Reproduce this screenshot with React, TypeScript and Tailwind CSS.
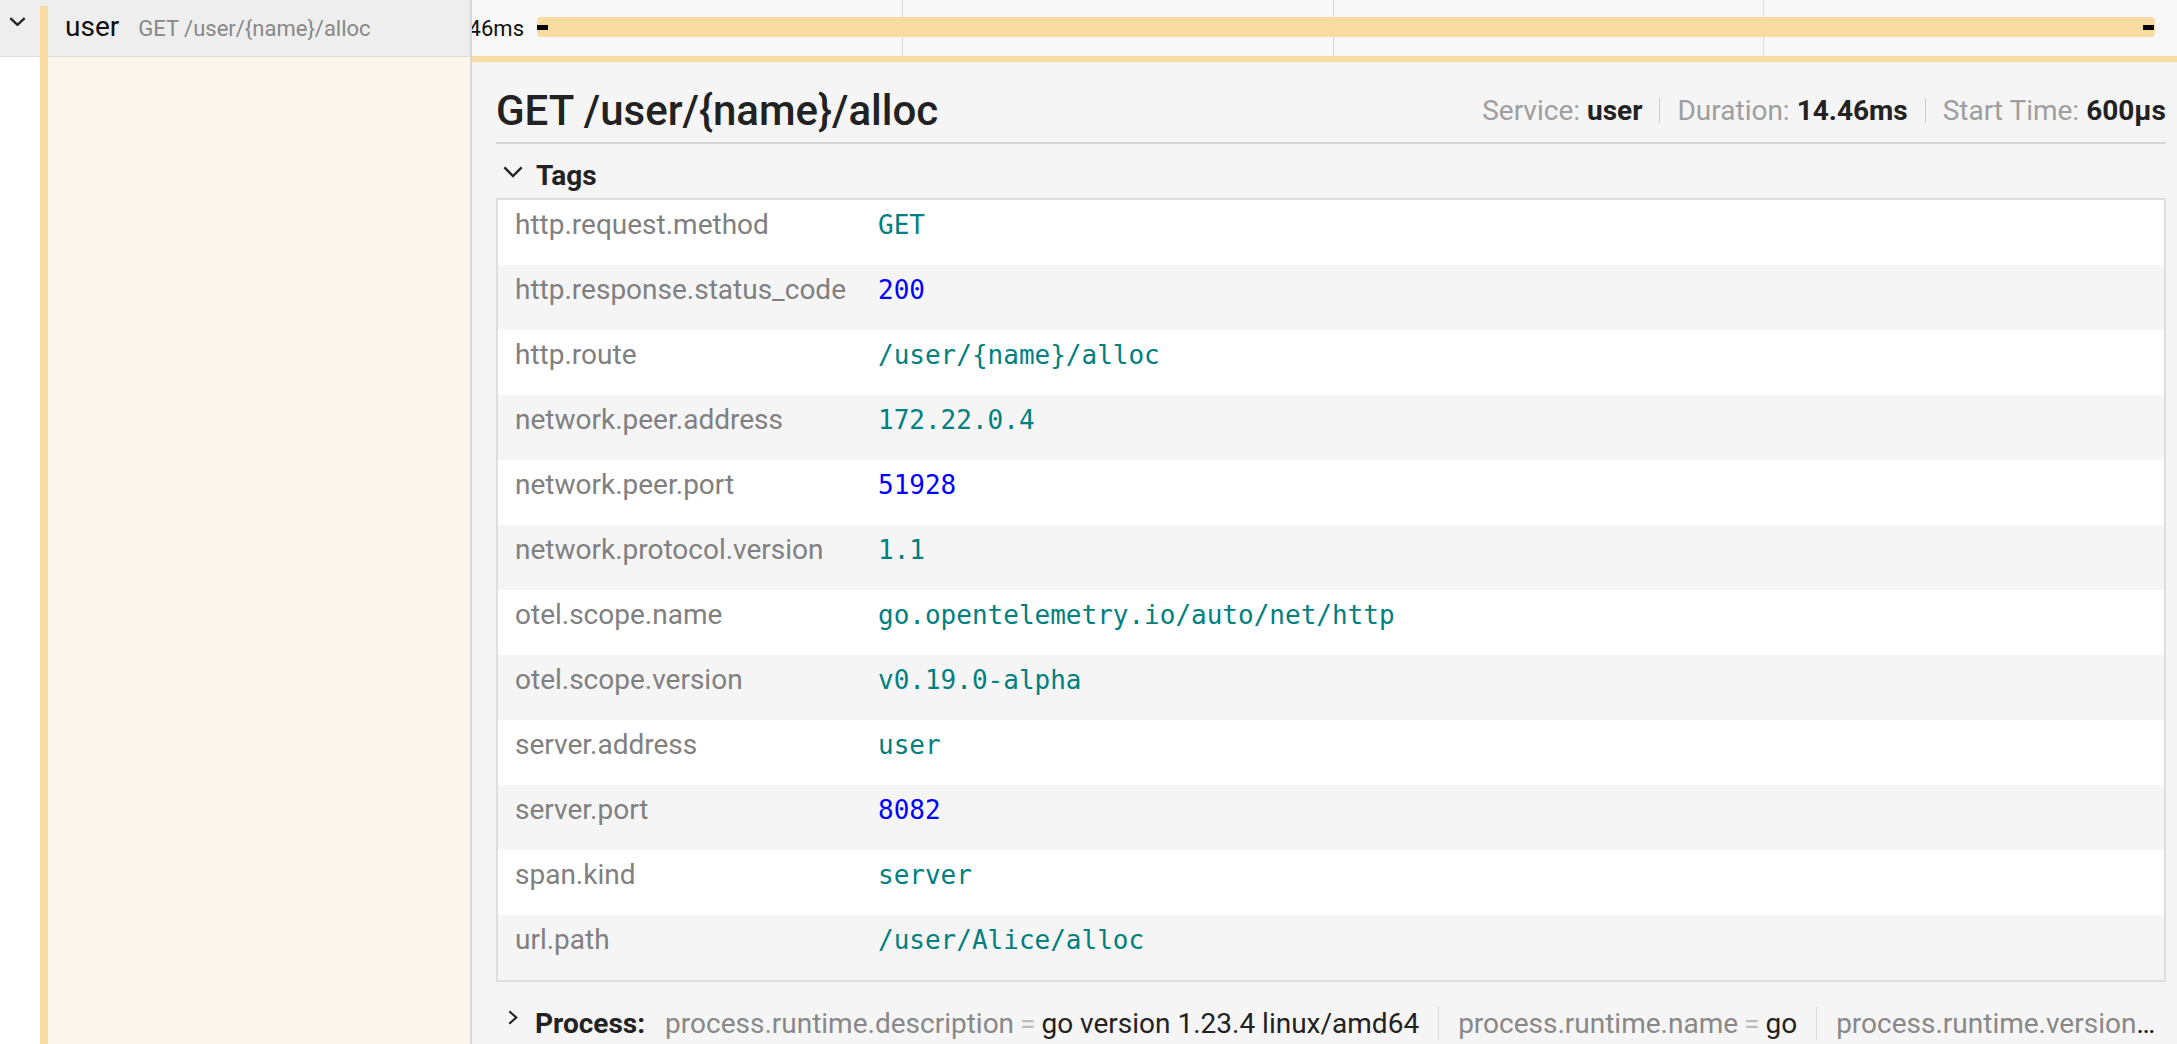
import React from "react";

const tags: [string, string, "s" | "n"][] = [
  ["http.request.method", "GET", "s"],
  ["http.response.status_code", "200", "n"],
  ["http.route", "/user/{name}/alloc", "s"],
  ["network.peer.address", "172.22.0.4", "s"],
  ["network.peer.port", "51928", "n"],
  ["network.protocol.version", "1.1", "s"],
  ["otel.scope.name", "go.opentelemetry.io/auto/net/http", "s"],
  ["otel.scope.version", "v0.19.0-alpha", "s"],
  ["server.address", "user", "s"],
  ["server.port", "8082", "n"],
  ["span.kind", "server", "s"],
  ["url.path", "/user/Alice/alloc", "s"],
];

const processItems: [string, string][] = [
  ["process.runtime.description", "go version 1.23.4 linux/amd64"],
  ["process.runtime.name", "go"],
  ["process.runtime.version", "go1.23.4"],
];

function Divider() {
  return <span className="mx-[17px] h-[25px] w-px shrink-0 bg-[#cccccc]" />;
}

export default function App() {
  return (
    <div className="flex h-[1044px] w-[2177px] overflow-hidden bg-white font-['Roboto','Noto_Sans',sans-serif]">
      {/* left column */}
      <div className="flex w-[472px] shrink-0 border-r-2 border-[#d8d8d8]">
        <div className="flex w-[40px] shrink-0 flex-col">
          <div className="h-[57px] shrink-0 border-b border-[#e0dbd6] bg-[#eeeeee] pl-[9px] pt-[17px]">
            <svg width="17" height="9" viewBox="0 0 17 9" className="block">
              <path d="M1.3 1.2 L8.5 7.9 L15.7 1.2" fill="none" stroke="#222" strokeWidth="2.3" />
            </svg>
          </div>
          <div className="flex-1 bg-white" />
        </div>
        <div className="flex w-[8px] shrink-0 flex-col">
          <div className="h-[6px] shrink-0 bg-[#eeeeee]" />
          <div className="flex-1 bg-[#f8dba1]" />
        </div>
        <div className="flex min-w-0 flex-1 flex-col">
          <div className="flex h-[57px] shrink-0 items-baseline overflow-hidden whitespace-nowrap border-b border-[#e0dbd6] bg-[#eeeeee] pl-[17px] pt-[10px]">
            <span className="text-[28px] leading-[33px] text-[#111111]">user</span>
            <span className="ml-[19px] text-[22px] leading-[33px] text-[#888888]">GET /user/{"{name}"}/alloc</span>
          </div>
          <div className="flex-1 bg-[#fdf6ec]" />
        </div>
      </div>

      {/* right column */}
      <div className="flex min-w-0 flex-1 flex-col">
        <div className="grid h-[56px] shrink-0 bg-[#f8f8f8]">
          <div className="col-start-1 row-start-1 grid grid-cols-[430px_431px_430px_1fr]">
            <div />
            <div className="border-l border-[#dadada]" />
            <div className="border-l border-[#dadada]" />
            <div className="border-l border-[#dadada]" />
          </div>
          <div className="col-start-1 row-start-1 flex items-center pb-[2px] pr-[22px]">
            <div className="mt-[3px] flex w-[52px] shrink-0 justify-end overflow-hidden">
              <span className="whitespace-nowrap text-[22px] leading-[26px] text-[#111111]">14.46ms</span>
            </div>
            <div className="ml-[13px] flex h-[20px] flex-1 items-center justify-between rounded-[4px] bg-[#f8dba1]">
              <div className="h-[5px] w-[11px] bg-black" />
              <div className="mr-[1px] h-[5px] w-[11px] bg-black" />
            </div>
          </div>
        </div>
        <div className="h-[6px] shrink-0 bg-[#f8dba1]" />

        <div className="flex-1 bg-[#f5f5f5] pl-[24px] pr-[11px]">
          {/* title row */}
          <div className="flex h-[82px] items-center justify-between border-b-2 border-[#d6d6d6] pt-[17px]">
            <h2 className="whitespace-nowrap text-[42px] font-medium leading-[49px] text-[#222222]">
              GET /user/{"{name}"}/alloc
            </h2>
            <div className="flex items-center whitespace-nowrap text-[28px] leading-[33px]">
              <span className="text-[#9e9e9e]">Service:</span>
              <span className="ml-[7px] font-bold text-[#222222]">user</span>
              <Divider />
              <span className="text-[#9e9e9e]">Duration:</span>
              <span className="ml-[7px] font-bold text-[#222222]">14.46ms</span>
              <Divider />
              <span className="text-[#9e9e9e]">Start Time:</span>
              <span className="ml-[7px] font-bold text-[#222222]">600µs</span>
            </div>
          </div>

          {/* tags header */}
          <div className="flex h-[54px] items-start pt-[15px]">
            <svg width="20" height="12" viewBox="0 0 20 12" className="ml-[7px] mt-[7px] block shrink-0">
              <path d="M1.4 1.4 L10 10 L18.6 1.4" fill="none" stroke="#222" strokeWidth="2.3" />
            </svg>
            <span className="ml-[13px] text-[28px] font-bold leading-[33px] text-[#222222]">Tags</span>
          </div>

          {/* tags table */}
          <div className="border-2 border-[#dedede]">
            {tags.map(([k, v, t], i) => (
              <div
                key={k}
                className={
                  i % 2 === 0
                    ? "flex h-[65px] items-baseline bg-white pt-[8px]"
                    : "flex h-[65px] items-baseline bg-[#f5f5f5] pt-[8px]"
                }
              >
                <div className="w-[380px] shrink-0 pl-[17px] text-[28px] leading-[33px] text-[#808080]">{k}</div>
                <div
                  className={
                    t === "n"
                      ? "font-['DejaVu_Sans_Mono',monospace] text-[26px] leading-[33px] text-[#0000ff]"
                      : "font-['DejaVu_Sans_Mono',monospace] text-[26px] leading-[33px] text-[#008080]"
                  }
                >
                  {v}
                </div>
              </div>
            ))}
          </div>

          {/* process row */}
          <div className="mt-[25px] flex items-start">
            <svg width="10" height="15" viewBox="0 0 10 15" className="ml-[12px] mt-[3px] block shrink-0">
              <path d="M1.3 1.2 L8.3 7.5 L1.3 13.8" fill="none" stroke="#222" strokeWidth="2.1" />
            </svg>
            <span className="ml-[17px] shrink-0 text-[28px] font-bold leading-[33px] text-[#222222]">Process:</span>
            <div className="ml-[20px] min-w-0 flex-1 overflow-hidden text-ellipsis whitespace-nowrap text-[28px] leading-[33px]">
              {processItems.map(([k, v], i) => (
                <span
                  key={k}
                  className={i === 0 ? "py-[3px] pr-[19px]" : "border-l border-[#dddddd] px-[19px] py-[3px]"}
                >
                  <span className="text-[#888888]">{k}</span>
                  <span className="px-[6px] text-[#bbbbbb]">=</span>
                  <span className="text-[#222222]">{v}</span>
                </span>
              ))}
            </div>
          </div>
        </div>
      </div>
    </div>
  );
}
